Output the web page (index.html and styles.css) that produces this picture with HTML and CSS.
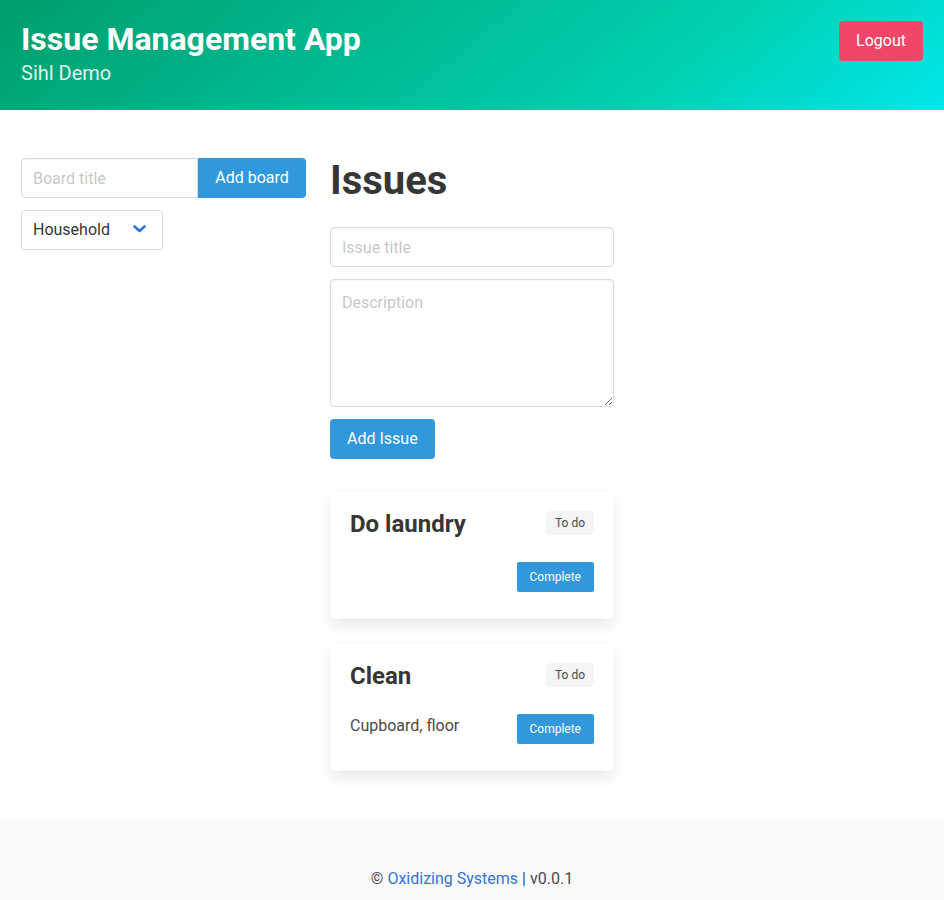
FILE: index.html
```html
<!DOCTYPE html>
<html lang="en">
<head>
<meta charset="utf-8">
<title>Issue Management App</title>
<link rel="stylesheet" href="styles.css">
</head>
<body>
<header class="hero">
  <div class="hero-text">
    <h1 class="hero-title">Issue Management App</h1>
    <p class="hero-subtitle">Sihl Demo</p>
  </div>
  <button class="btn btn-danger">Logout</button>
</header>

<main class="section">
  <div class="columns">
    <aside class="sidebar">
      <div class="addon">
        <input class="input addon-input" type="text" placeholder="Board title">
        <button class="btn btn-info addon-btn">Add board</button>
      </div>
      <div class="select-wrap">
        <select class="select">
          <option>Household</option>
        </select>
        <svg class="select-arrow" width="13" height="8" viewBox="0 0 13 8"><path d="M1.5 1.5 L6.5 6 L11.5 1.5" fill="none" stroke="#3273dc" stroke-width="2.6" stroke-linecap="round" stroke-linejoin="round"/></svg>
      </div>
    </aside>

    <section class="issues">
      <h2 class="page-title">Issues</h2>
      <input class="input field" type="text" placeholder="Issue title">
      <textarea class="input textarea field" placeholder="Description"></textarea>
      <button class="btn btn-info">Add Issue</button>

      <div class="cards">
        <article class="card">
          <div class="card-head">
            <h3 class="card-title">Do laundry</h3>
            <span class="tag">To do</span>
          </div>
          <div class="card-body">
            <p class="card-desc"></p>
            <button class="btn btn-info btn-small">Complete</button>
          </div>
        </article>

        <article class="card">
          <div class="card-head">
            <h3 class="card-title">Clean</h3>
            <span class="tag">To do</span>
          </div>
          <div class="card-body">
            <p class="card-desc">Cupboard, floor</p>
            <button class="btn btn-info btn-small">Complete</button>
          </div>
        </article>
      </div>
    </section>
  </div>
</main>

<footer class="footer">
  <p>© <a href="#">Oxidizing Systems</a> | v0.0.1</p>
</footer>
</body>
</html>
```
FILE: styles.css
```css
* { box-sizing: border-box; }

html, body {
  margin: 0;
  padding: 0;
}

body {
  font-family: Roboto, "Noto Sans", "Liberation Sans", sans-serif;
  font-size: 16px;
  line-height: 1.5;
  color: #4a4a4a;
  background: #fff;
}

h1, h2, h3, p { margin: 0; }

/* Header */
.hero {
  display: flex;
  justify-content: space-between;
  align-items: flex-start;
  padding: 21px 21px 24px;
  height: 110px;
  background-image: linear-gradient(141deg, #009e6c 0%, #00d1b2 71%, #00e7eb 100%);
  color: #fff;
}

.hero-title {
  font-size: 32px;
  font-weight: 700;
  line-height: 36px;
  color: #fff;
}

.hero-subtitle {
  margin-top: 4px;
  font-size: 20px;
  line-height: 25px;
  color: rgba(255, 255, 255, 0.9);
}

/* Buttons */
.btn {
  font-family: inherit;
  font-size: 16px;
  line-height: 1.5;
  height: 40px;
  padding: 0 16px;
  border: 1px solid transparent;
  border-radius: 4px;
  color: #fff;
  cursor: pointer;
  white-space: nowrap;
}

.btn-danger { background: #f14668; }
.btn-info { background: #3298dc; }

.btn-small {
  font-size: 12px;
  height: 30px;
  padding: 0 12px;
  border-radius: 2px;
}

/* Main section */
.section {
  padding: 48px 21px;
}

.columns {
  display: grid;
  grid-template-columns: 285px 284px;
  column-gap: 24px;
  align-items: start;
}

.addon {
  display: flex;
}

.input {
  font-family: inherit;
  font-size: 16px;
  line-height: 1.5;
  height: 40px;
  padding: 0 11px;
  color: #363636;
  background: #fff;
  border: 1px solid #dbdbdb;
  border-radius: 4px;
  box-shadow: inset 0 1px 2px rgba(10, 10, 10, 0.05);
  outline: none;
}

.input::placeholder { color: rgba(54, 54, 54, 0.3); }

.addon-input {
  width: 177px;
  border-radius: 4px 0 0 4px;
}

.addon-btn {
  width: 108px;
  border-radius: 0 4px 4px 0;
}

.select-wrap {
  position: relative;
  width: 142px;
  margin-top: 12px;
}

.select {
  appearance: none;
  -webkit-appearance: none;
  width: 142px;
  height: 40px;
  padding: 0 30px 0 11px;
  font-family: inherit;
  font-size: 16px;
  line-height: 38px;
  color: #363636;
  background: #fff;
  border: 1px solid #dbdbdb;
  border-radius: 4px;
  outline: none;
}

.select-arrow {
  position: absolute;
  left: 112px;
  top: 15px;
  pointer-events: none;
}

/* Issues column */
.issues {
  display: flex;
  flex-direction: column;
  align-items: flex-start;
}

.page-title {
  font-size: 40px;
  font-weight: 700;
  line-height: 45px;
  color: #363636;
  margin-bottom: 24px;
}

.field {
  width: 284px;
  margin-bottom: 12px;
}

.textarea {
  display: block;
  height: 128px;
  padding: 11px;
  resize: vertical;
}

.cards {
  display: flex;
  flex-direction: column;
  gap: 24px;
  width: 284px;
  margin-top: 32px;
}

.card {
  background: #fff;
  border-radius: 6px;
  padding: 20px 20px 27px;
  box-shadow: 0 8px 16px -2px rgba(10, 10, 10, 0.1), 0 0 0 1px rgba(10, 10, 10, 0.02);
}

.card-head {
  display: flex;
  justify-content: space-between;
  align-items: flex-start;
  height: 24px;
  margin-bottom: 27px;
}

.card-title {
  font-size: 24px;
  font-weight: 700;
  line-height: 24px;
  padding-top: 1px;
  color: #363636;
}

.tag {
  display: inline-flex;
  align-items: center;
  height: 24px;
  padding: 0 9px;
  font-size: 12px;
  color: #4a4a4a;
  background: #f5f5f5;
  border-radius: 4px;
}

.card-body {
  display: flex;
  justify-content: space-between;
  align-items: flex-start;
}

.card-desc {
  font-size: 16px;
  line-height: 24px;
  color: #4a4a4a;
}

/* Footer */
.footer {
  background: #fafafa;
  padding: 48px 24px 96px;
  text-align: center;
  color: #4a4a4a;
}

.footer a {
  color: #3273dc;
  text-decoration: none;
}
```
